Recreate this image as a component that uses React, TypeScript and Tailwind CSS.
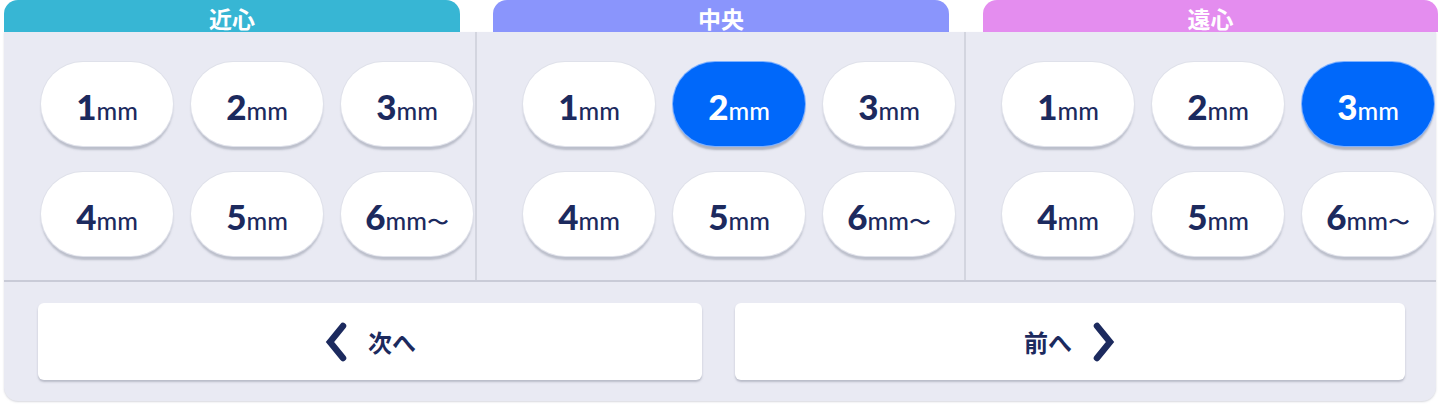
import React from "react";

const navy = "text-[#1c2a5e]";

function SizeButton({ n, selected, tilde }: { n: number; selected?: boolean; tilde?: boolean }) {
  return (
    <div
      className={`flex h-[84px] w-[132px] items-center justify-center rounded-[42px] ${
        selected
          ? "bg-[#0068fa] text-white shadow-[0_4px_2px_rgba(130,134,150,0.55)] ring-1 ring-[#7fb1ff]"
          : `bg-white ${navy} shadow-[0_4px_2px_rgba(150,154,170,0.55)] ring-1 ring-[#dfe1ea]`
      }`}
      style={{ fontFamily: "Lato, 'Noto Sans', sans-serif" }}
    >
      <span className="flex items-baseline pt-[4px]">
        <span className="text-[35px] font-black leading-none">{n}</span>
        <span className="text-[25px] font-medium leading-none">mm</span>
        {tilde && <span className="text-[22px] font-medium leading-none">〜</span>}
      </span>
    </div>
  );
}

function Column({ selected, className }: { selected?: number; className: string }) {
  return (
    <div className={`grid grid-cols-[132px_132px_132px] gap-x-[18px] gap-y-[26px] pt-[30px] pb-[24px] ${className}`}>
      {[1, 2, 3, 4, 5, 6].map((n) => (
        <SizeButton key={n} n={n} selected={selected === n} tilde={n === 6} />
      ))}
    </div>
  );
}

function Chevron({ dir }: { dir: "left" | "right" }) {
  return (
    <svg width="24" height="42" viewBox="0 0 24 42" fill="none">
      <path
        d={dir === "left" ? "M19 5 L6 21 L19 37" : "M5 5 L18 21 L5 37"}
        stroke="#1c2a5e"
        strokeWidth="6.5"
        strokeLinecap="round"
        strokeLinejoin="miter"
      />
    </svg>
  );
}

function Tab({ label, color, className }: { label: string; color: string; className: string }) {
  return (
    <div className={`flex h-[32px] justify-center rounded-t-[14px] pt-[5px] ${color} ${className}`}>
      <span className="text-[23px] font-bold leading-[26px] text-white">{label}</span>
    </div>
  );
}

export default function App() {
  const jp = { fontFamily: "'Noto Sans CJK JP', 'Noto Sans', sans-serif" };
  return (
    <div className="h-[406px] w-[1440px] bg-white">
      <div className="flex h-[32px] pl-[4px]" style={jp}>
        <Tab label="近心" color="bg-[#37b6d4]" className="w-[456px]" />
        <Tab label="中央" color="bg-[#8a95fc]" className="ml-[33px] w-[456px]" />
        <Tab label="遠心" color="bg-[#e48def]" className="ml-[34px] w-[455px]" />
      </div>
      <div className="ml-[4px] w-[1432px] overflow-hidden rounded-b-[14px] bg-[#e9eaf3] shadow-[0_1px_2px_rgba(140,144,160,0.35)]">
        <div className="flex">
          <Column className="w-[471px] pl-[37px]" />
          <div className="w-[2px] bg-[#d3d5df]" />
          <Column className="w-[487px] pl-[46px]" selected={2} />
          <div className="w-[2px] bg-[#d3d5df]" />
          <Column className="flex-1 pl-[36px]" selected={3} />
        </div>
        <div className="h-[2px] bg-[#c9cbd7]" />
        <div className="flex gap-[33px] pl-[34px] pt-[21px] pb-[21px]" style={jp}>
          <div className="flex h-[77px] w-[664px] items-center justify-center gap-[20px] rounded-[6px] bg-white shadow-[0_2px_2px_rgba(140,144,160,0.5)]">
            <Chevron dir="left" />
            <span className={`text-[24px] font-bold ${navy}`}>次へ</span>
          </div>
          <div className="flex h-[77px] w-[670px] items-center justify-center gap-[20px] rounded-[6px] bg-white shadow-[0_2px_2px_rgba(140,144,160,0.5)]">
            <span className={`text-[24px] font-bold ${navy}`}>前へ</span>
            <Chevron dir="right" />
          </div>
        </div>
      </div>
    </div>
  );
}
